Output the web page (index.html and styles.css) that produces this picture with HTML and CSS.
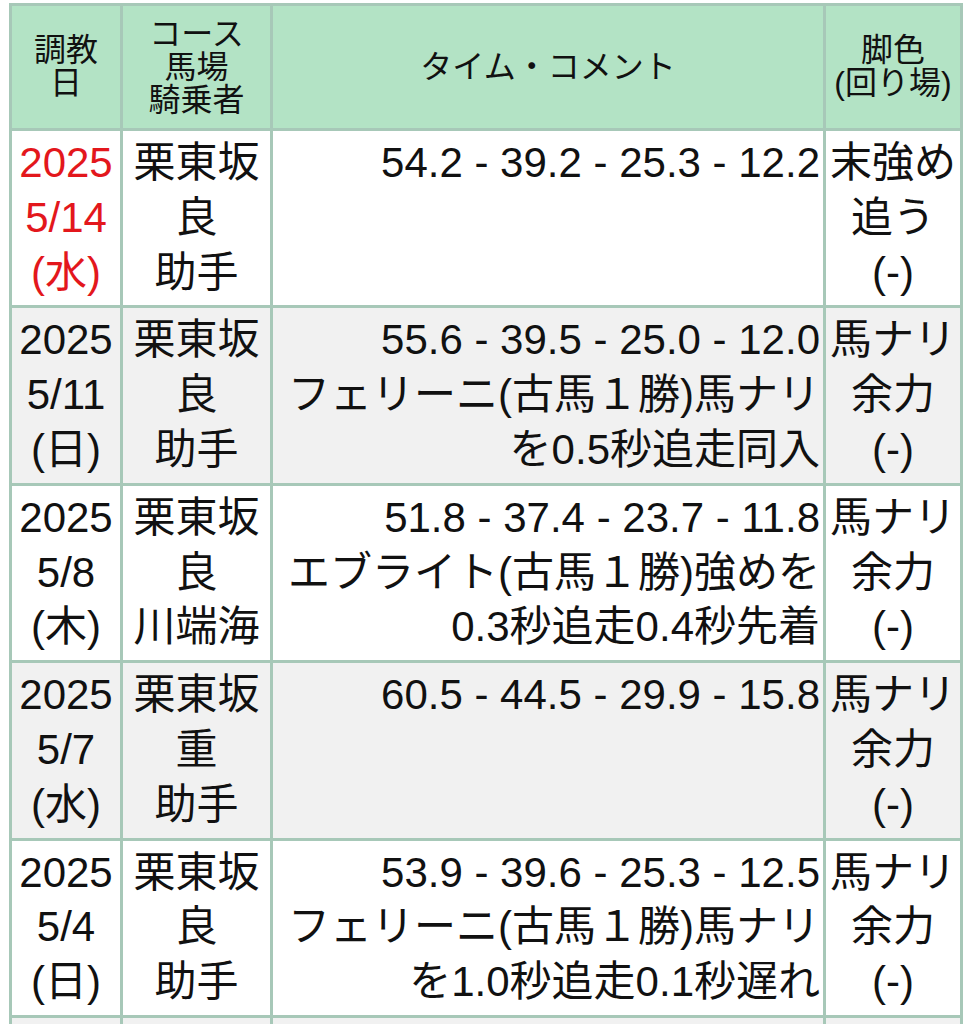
FILE: index.html
```html
<!DOCTYPE html>
<html lang="ja">
<head>
<meta charset="utf-8">
<title>調教</title>
<link rel="stylesheet" href="styles.css">
</head>
<body>
<table class="train">
  <colgroup>
    <col class="c-date">
    <col class="c-course">
    <col class="c-time">
    <col class="c-leg">
  </colgroup>
  <thead>
    <tr>
      <th>調教<br>日</th>
      <th>コース<br>馬場<br>騎乗者</th>
      <th>タイム・コメント</th>
      <th>脚色<br>(回り場)</th>
    </tr>
  </thead>
  <tbody>
    <tr>
      <td class="date latest">2025<br>5/14<br>(水)</td>
      <td class="course">栗東坂<br>良<br>助手</td>
      <td class="time">54.2 - 39.2 - 25.3 - 12.2</td>
      <td class="leg">末強め<br>追う<br>(-)</td>
    </tr>
    <tr class="alt">
      <td class="date">2025<br>5/11<br>(日)</td>
      <td class="course">栗東坂<br>良<br>助手</td>
      <td class="time">55.6 - 39.5 - 25.0 - 12.0<br>フェリーニ(古馬１勝)馬ナリ<br>を0.5秒追走同入</td>
      <td class="leg">馬ナリ<br>余力<br>(-)</td>
    </tr>
    <tr>
      <td class="date">2025<br>5/8<br>(木)</td>
      <td class="course">栗東坂<br>良<br>川端海</td>
      <td class="time">51.8 - 37.4 - 23.7 - 11.8<br>エブライト(古馬１勝)強めを<br>0.3秒追走0.4秒先着</td>
      <td class="leg">馬ナリ<br>余力<br>(-)</td>
    </tr>
    <tr class="alt">
      <td class="date">2025<br>5/7<br>(水)</td>
      <td class="course">栗東坂<br>重<br>助手</td>
      <td class="time">60.5 - 44.5 - 29.9 - 15.8</td>
      <td class="leg">馬ナリ<br>余力<br>(-)</td>
    </tr>
    <tr>
      <td class="date">2025<br>5/4<br>(日)</td>
      <td class="course">栗東坂<br>良<br>助手</td>
      <td class="time">53.9 - 39.6 - 25.3 - 12.5<br>フェリーニ(古馬１勝)馬ナリ<br>を1.0秒追走0.1秒遅れ</td>
      <td class="leg">馬ナリ<br>余力<br>(-)</td>
    </tr>
    <tr class="alt next">
      <td></td>
      <td></td>
      <td></td>
      <td></td>
    </tr>
  </tbody>
</table>
</body>
</html>
```

FILE: styles.css
```css
html, body {
  background: #ffffff;
}

body {
  margin: 3px 0 0 9px;
  font-family: "Liberation Sans", "Noto Sans CJK JP", sans-serif;
  color: #111111;
}

.train {
  border-collapse: collapse;
  table-layout: fixed;
  width: 954px;
}

.c-date { width: 111px; }
.c-course { width: 150px; }
.c-time { width: 553px; }
.c-leg { width: 137px; }

.train th,
.train td {
  border: 3px solid #a7c8b8;
  padding: 5px 3px;
  vertical-align: top;
}

.train th {
  background: #b3e3c5;
  font-weight: normal;
  font-size: 32px;
  line-height: 33px;
  padding: 11.5px 3px;
  text-align: center;
  vertical-align: middle;
}

.train td {
  font-size: 42px;
  line-height: 54.8px;
}

.train tr.alt td {
  background: #f1f1f1;
}

.train tr.next td {
  height: 60px;
}

.date,
.course,
.leg {
  text-align: center;
}

.time {
  text-align: right;
  white-space: nowrap;
}

.latest {
  color: #e3171c;
}
```
